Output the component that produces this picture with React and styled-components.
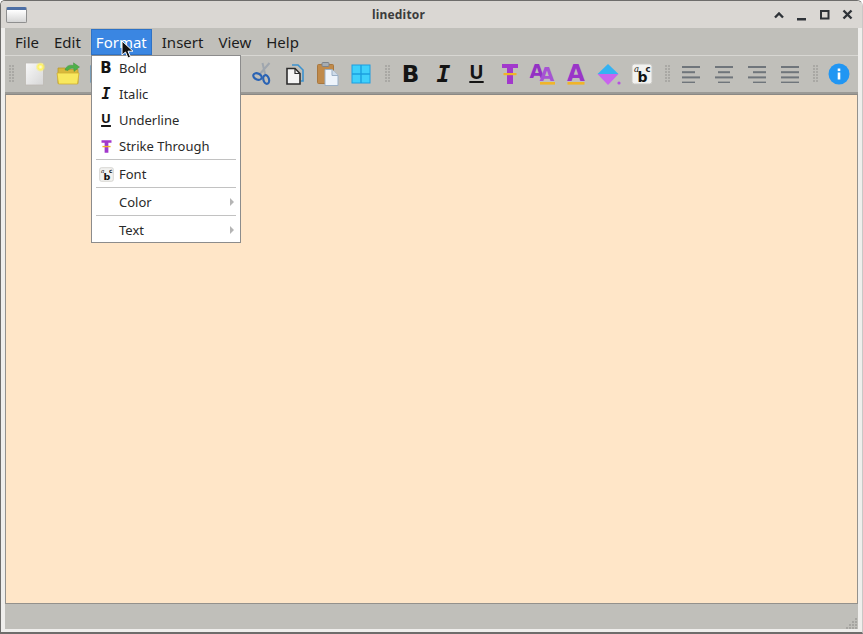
import styled, { createGlobalStyle } from 'styled-components';

const GlobalStyle = createGlobalStyle`
  html, body {
    margin: 0;
    padding: 0;
    width: 100%;
    height: 100%;
    background: #ffffff;
    overflow: hidden;
  }
`;

// Window frame
const Frame = styled.div`
  position: relative;
  box-sizing: border-box;
  display: flex;
  flex-direction: column;
  width: 863px;
  height: 634px;
  background-color: #efeeec;
  border: 1px solid #6e6d6b;
  border-right-color: #c9c8c6;
  border-bottom-width: 2px;
  border-radius: 5px 6px 0 0;
  font-family: "Noto Sans", sans-serif;
  color: #1c1c1c;
  overflow: hidden;
`;

const TitleBar = styled.div`
  display: flex;
  align-items: center;
  flex: 0 0 27px;
  background-color: #dad7d3;
  padding: 0 5px;
`;

const AppIcon = styled.div`
  box-sizing: border-box;
  width: 21px;
  height: 16px;
  border: 1px solid #8f8f8f;
  border-top: 3px solid #4d6fa5;
  border-radius: 2px;
  background: linear-gradient(#ffffff, #d6d6d6);
`;

const Title = styled.div`
  flex: 1;
  text-align: center;
  font-size: 12px;
  font-weight: 700;
  color: #3c3c3c;
  letter-spacing: 0.2px;
`;

const TitleButtons = styled.div`
  display: flex;
  gap: 5px;
`;

const Client = styled.div`
  display: flex;
  flex-direction: column;
  flex: 1;
  margin: 0 4px 3px;
  background-color: #c0bfba;
  min-height: 0;
`;

// Menu bar
const MenuBar = styled.div`
  display: flex;
  gap: 5px;
  flex: 0 0 27px;
  padding: 1px 5px 0;
  box-sizing: border-box;
`;

const MenuItem = styled.div`
  display: flex;
  align-items: center;
  padding: 0 5px 1px;
  font-size: 15px;
  color: ${(p) => (p.$active ? '#ffffff' : '#1c1c1c')};
  background-color: ${(p) => (p.$active ? '#3a86e2' : 'transparent')};
  box-shadow: ${(p) => (p.$active ? 'inset 0 0 0 1px #2e72c6' : 'none')};
`;

// Tool bar
const ToolBar = styled.div`
  display: flex;
  align-items: center;
  flex: none;
  height: 36px;
  border-top: 1px solid #d8d7d3;
  border-bottom: 2px solid #9b9a96;
  padding-left: 4px;
`;

const Handle = styled.div`
  flex: 0 0 6px;
  height: 18px;
  margin: ${(p) => p.$margin || '0 3px 0 0'};
  background-image: radial-gradient(circle at 1px 1px, #a9a8a4 1px, transparent 1.2px);
  background-size: 3px 3px;
`;

const ToolButton = styled.div`
  display: flex;
  align-items: center;
  justify-content: center;
  flex: 0 0 33px;
  height: 33px;
`;

const Gap = styled.div`
  flex: 0 0 ${(p) => p.$width}px;
`;

const Glyph = styled.span`
  font-family: ${(p) => p.$font || '"DejaVu Sans"'}, sans-serif;
  font-size: ${(p) => p.$size || 23}px;
  font-weight: 700;
  font-style: ${(p) => (p.$italic ? 'italic' : 'normal')};
  text-decoration: ${(p) => (p.$under ? 'underline' : 'none')};
  text-decoration-thickness: 2px;
  text-underline-offset: 2px;
  padding-bottom: ${(p) => (p.$under ? '0.2em' : '0')};
  line-height: 1;
  color: #141414;
`;

// Editor and status
const Editor = styled.div`
  flex: 1;
  box-sizing: border-box;
  background-color: #ffe6c8;
  border: 1px solid #94918c;
  border-top-color: #8b8985;
`;

const StatusBar = styled.div`
  position: relative;
  flex: 0 0 25px;
`;

const Grip = styled.svg`
  position: absolute;
  right: 0;
  bottom: 0;
`;

// Format popup
const Popup = styled.div`
  position: absolute;
  left: 90px;
  top: 54px;
  box-sizing: border-box;
  width: 150px;
  height: 188px;
  padding: 0 4px;
  background-color: #ffffff;
  border: 1px solid #8c8c8c;
`;

const PopupRow = styled.div`
  display: flex;
  align-items: center;
  box-sizing: border-box;
  height: 26px;
  padding-bottom: 2px;
  font-size: 13px;
  color: #2a2a2a;
`;

const RowIcon = styled.div`
  display: flex;
  align-items: center;
  justify-content: center;
  flex: 0 0 20px;
  margin-right: 3px;
`;

const RowLabel = styled.div`
  flex: 1;
`;

const SubArrow = styled.div`
  width: 0;
  height: 0;
  margin-right: 2px;
  border-left: 4px solid #b5b5b5;
  border-top: 4px solid transparent;
  border-bottom: 4px solid transparent;
`;

const Divider = styled.div`
  height: 1px;
  margin: -1px 0 2px;
  background-color: #c2c2c2;
`;

const Cursor = styled.svg`
  position: absolute;
  left: 120px;
  top: 39px;
`;

// Icons
const ChevronUp = () => (
  <svg width="18" height="18" viewBox="0 0 18 18" fill="none" stroke="#2f3338" strokeWidth="2.4">
    <path d="M5 11.5 L9 7.5 L13 11.5" />
  </svg>
);

const Minimize = () => (
  <svg width="18" height="18" viewBox="0 0 18 18">
    <rect x="4" y="12" width="9" height="2.5" fill="#2f3338" />
  </svg>
);

const Maximize = () => (
  <svg width="18" height="18" viewBox="0 0 18 18" fill="none" stroke="#2f3338" strokeWidth="2">
    <rect x="5" y="5" width="7.5" height="7.5" />
  </svg>
);

const CloseX = () => (
  <svg width="18" height="18" viewBox="0 0 18 18" fill="none" stroke="#2f3338" strokeWidth="2.4">
    <path d="M4.5 4.5 L12.5 12.5 M12.5 4.5 L4.5 12.5" />
  </svg>
);

const NewIcon = () => (
  <svg width="24" height="24" viewBox="0 0 24 24">
    <defs>
      <linearGradient id="pageFill" x1="0" y1="0" x2="1" y2="1">
        <stop offset="0" stopColor="#f9f9f9" />
        <stop offset="1" stopColor="#d6d6d6" />
      </linearGradient>
      <radialGradient id="starGlow">
        <stop offset="0" stopColor="#fffde0" />
        <stop offset="0.5" stopColor="#fff25e" />
        <stop offset="1" stopColor="#fff25e" stopOpacity="0" />
      </radialGradient>
    </defs>
    <rect x="2.5" y="1" width="18" height="22" fill="url(#pageFill)" stroke="#bdbab4" strokeWidth="0.8" />
    <circle cx="17.5" cy="5" r="5" fill="url(#starGlow)" />
  </svg>
);

const OpenIcon = () => (
  <svg width="26" height="24" viewBox="0 0 26 24">
    <path d="M3 6 h7 l2 1.5 h11 v14 H3 Z" fill="#d9b93c" stroke="#b89a30" strokeWidth="0.8" />
    <path d="M2 11 h22 l-1.5 11 H3.5 Z" fill="#f8e85e" stroke="#cfae34" strokeWidth="0.8" />
    <path d="M10 8 C11 3.5 15 2.5 18.5 3.5 L18.5 0.8 L24.5 5 L19 9.5 L18.8 6.5 C16 6 14 6.5 13 8.5 Z" fill="#4fb04a" stroke="#3a8c38" strokeWidth="0.4" />
  </svg>
);

const SaveIcon = () => (
  <svg width="24" height="24" viewBox="0 0 24 24">
    <rect x="2" y="2" width="20" height="20" rx="2" fill="#4a9fe0" stroke="#2f78b5" />
    <rect x="6" y="3" width="12" height="7" fill="#e8f2fb" />
    <rect x="7" y="14" width="10" height="8" fill="#d4e4f2" />
  </svg>
);

const CutIcon = () => (
  <svg width="22" height="26" viewBox="0 0 22 26" fill="none">
    <path d="M8 14 L18.5 2 M14.5 15 L11.5 2" stroke="#9fa6ae" strokeWidth="2" />
    <ellipse cx="6.5" cy="15.5" rx="4.4" ry="3" transform="rotate(25 6.5 15.5)" stroke="#2a63b4" strokeWidth="2.2" />
    <ellipse cx="15.2" cy="18.5" rx="2.8" ry="4.4" transform="rotate(-15 15.2 18.5)" stroke="#2a63b4" strokeWidth="2.2" />
  </svg>
);

const CopyIcon = () => (
  <svg width="22" height="24" viewBox="0 0 22 24" fill="none">
    <path d="M8 3 h6 l5 5 v11 h-2" stroke="#3b92cf" strokeWidth="1.6" />
    <path d="M3 6.5 h8 l5 5 v10.5 H3 Z" fill="#f4f4f4" stroke="#2c2c2c" strokeWidth="1.6" />
    <path d="M11 6.5 v5 h5" stroke="#2c2c2c" strokeWidth="1.2" />
  </svg>
);

const PasteIcon = () => (
  <svg width="24" height="26" viewBox="0 0 24 26">
    <rect x="1.5" y="3.5" width="16" height="19" rx="1" fill="#c08a4a" stroke="#a8773f" />
    <rect x="6" y="1.5" width="7" height="4" rx="1" fill="#a6acb2" stroke="#7d838a" />
    <path d="M9 8.5 h7 l6 6 v10 H9 Z" fill="#eef4fb" stroke="#9bb0c6" />
    <path d="M16 8.5 v6 h6" fill="#cfdcea" stroke="#9bb0c6" />
  </svg>
);

const GridIcon = () => (
  <svg width="20" height="20" viewBox="0 0 20 20">
    <rect x="1" y="1" width="18" height="18" fill="#3fd0fb" stroke="#1c9ee0" />
    <path d="M10 1 V19 M1 10 H19" stroke="#1c9ee0" strokeWidth="1.4" />
  </svg>
);

const StrikeIcon = ({ size = 24 }) => (
  <svg width={size} height={size} viewBox="0 0 24 24">
    <path d="M4 2 H20 V6 H15 V22 H9 V6 H4 Z" fill="#a238cc" />
    <rect x="5.5" y="11" width="13" height="2.2" fill="#f0b429" />
  </svg>
);

const DoubleAIcon = () => (
  <svg width="28" height="26" viewBox="0 0 28 26">
    <text x="0.5" y="16.5" fontFamily="DejaVu Sans" fontWeight="700" fontSize="19" fill="#9332c4">A</text>
    <text x="10.5" y="19.5" fontFamily="DejaVu Sans" fontWeight="700" fontSize="19" fill="#a653d4">A</text>
    <rect x="11" y="21" width="15" height="2.6" fill="#f0b429" />
  </svg>
);

const ColorAIcon = () => (
  <svg width="22" height="26" viewBox="0 0 22 26">
    <text x="2" y="19.5" fontFamily="DejaVu Sans" fontWeight="700" fontSize="23" fill="#9a35c8">A</text>
    <rect x="2.5" y="21" width="17" height="2.6" fill="#f0b429" />
  </svg>
);

const FillIcon = () => (
  <svg width="24" height="24" viewBox="0 0 24 24">
    <path d="M11 2 L21.5 12 H0.5 Z" fill="#35b2f2" />
    <path d="M0.5 12 H21.5 L11 23 Z" fill="#c964ee" />
    <circle cx="22" cy="21" r="1.6" fill="#b552e0" />
  </svg>
);

const FontIcon = ({ size = 22 }) => (
  <svg width={size} height={size} viewBox="0 0 22 22">
    <rect x="1" y="1" width="20" height="20" rx="2.5" fill="#f2f2f0" stroke="#c8c7c3" />
    <text x="3" y="9" fontFamily="DejaVu Serif" fontStyle="italic" fontSize="8.5" fill="#222">a</text>
    <text x="6.5" y="18.5" fontFamily="DejaVu Sans" fontWeight="700" fontSize="14" fill="#111">b</text>
    <text x="14.5" y="9" fontFamily="DejaVu Sans" fontWeight="700" fontSize="8.5" fill="#222">c</text>
  </svg>
);

const alignRows = {
  left: [[0, 18], [0, 13], [0, 18], [0, 13]],
  center: [[0, 18], [3, 12], [0, 18], [3, 12]],
  right: [[0, 18], [5, 13], [0, 18], [5, 13]],
  justify: [[0, 18], [0, 18], [0, 18], [0, 18]],
};

const AlignIcon = ({ mode }) => (
  <svg width="18" height="18" viewBox="0 0 18 18">
    {alignRows[mode].map(([x, w], i) => (
      <rect key={i} x={x} y={1 + i * 5.2} width={w} height="2" fill="#6f757b" />
    ))}
  </svg>
);

const InfoIcon = () => (
  <svg width="22" height="22" viewBox="0 0 22 22">
    <circle cx="11" cy="11" r="10.5" fill="#2196f3" />
    <rect x="9.7" y="9.5" width="2.6" height="7" fill="#ffffff" />
    <rect x="9.7" y="5.5" width="2.6" height="2.6" fill="#ffffff" />
  </svg>
);

const monoFont = '"DejaVu Sans Mono"';
const plainFont = '"Noto Sans"';

function App() {
  return (
    <>
      <GlobalStyle />
      <Frame>
        <TitleBar>
          <AppIcon />
          <Title>lineditor</Title>
          <TitleButtons>
            <ChevronUp />
            <Minimize />
            <Maximize />
            <CloseX />
          </TitleButtons>
        </TitleBar>

        <Client>
          <MenuBar>
            <MenuItem>File</MenuItem>
            <MenuItem>Edit</MenuItem>
            <MenuItem $active>Format</MenuItem>
            <MenuItem>Insert</MenuItem>
            <MenuItem>View</MenuItem>
            <MenuItem>Help</MenuItem>
          </MenuBar>

          <ToolBar>
            <Handle />
            <ToolButton><NewIcon /></ToolButton>
            <ToolButton><OpenIcon /></ToolButton>
            <ToolButton><SaveIcon /></ToolButton>
            <Gap $width={119} />
            <Handle />
            <ToolButton><CutIcon /></ToolButton>
            <ToolButton><CopyIcon /></ToolButton>
            <ToolButton><PasteIcon /></ToolButton>
            <ToolButton><GridIcon /></ToolButton>
            <Handle $margin="0 3px 0 8px" />
            <ToolButton><Glyph>B</Glyph></ToolButton>
            <ToolButton><Glyph $italic $font={monoFont}>I</Glyph></ToolButton>
            <ToolButton><Glyph $under $size={19} $font={plainFont}>U</Glyph></ToolButton>
            <ToolButton><StrikeIcon /></ToolButton>
            <ToolButton><DoubleAIcon /></ToolButton>
            <ToolButton><ColorAIcon /></ToolButton>
            <ToolButton><FillIcon /></ToolButton>
            <ToolButton><FontIcon /></ToolButton>
            <Handle $margin="0 3px 0 7px" />
            <ToolButton><AlignIcon mode="left" /></ToolButton>
            <ToolButton><AlignIcon mode="center" /></ToolButton>
            <ToolButton><AlignIcon mode="right" /></ToolButton>
            <ToolButton><AlignIcon mode="justify" /></ToolButton>
            <Handle $margin="0 3px 0 7px" />
            <ToolButton><InfoIcon /></ToolButton>
          </ToolBar>

          <Editor />

          <StatusBar>
            <Grip width="12" height="12" viewBox="0 0 12 12" fill="#a6a5a1">
              <rect x="9" y="1" width="2" height="2" />
              <rect x="6" y="4" width="2" height="2" />
              <rect x="9" y="4" width="2" height="2" />
              <rect x="3" y="7" width="2" height="2" />
              <rect x="6" y="7" width="2" height="2" />
              <rect x="9" y="7" width="2" height="2" />
              <rect x="0" y="10" width="2" height="2" />
              <rect x="3" y="10" width="2" height="2" />
              <rect x="6" y="10" width="2" height="2" />
              <rect x="9" y="10" width="2" height="2" />
            </Grip>
          </StatusBar>
        </Client>

        <Popup>
          <PopupRow><RowIcon><Glyph $size={15}>B</Glyph></RowIcon><RowLabel>Bold</RowLabel></PopupRow>
          <PopupRow><RowIcon><Glyph $size={15} $italic $font={monoFont}>I</Glyph></RowIcon><RowLabel>Italic</RowLabel></PopupRow>
          <PopupRow><RowIcon><Glyph $size={13} $under $font={plainFont}>U</Glyph></RowIcon><RowLabel>Underline</RowLabel></PopupRow>
          <PopupRow><RowIcon><StrikeIcon size={15} /></RowIcon><RowLabel>Strike Through</RowLabel></PopupRow>
          <Divider />
          <PopupRow><RowIcon><FontIcon size={15} /></RowIcon><RowLabel>Font</RowLabel></PopupRow>
          <Divider />
          <PopupRow><RowIcon /><RowLabel>Color</RowLabel><SubArrow /></PopupRow>
          <Divider />
          <PopupRow><RowIcon /><RowLabel>Text</RowLabel><SubArrow /></PopupRow>
        </Popup>

        <Cursor width="14" height="20" viewBox="0 0 14 20">
          <path d="M1 1 L1 15 L4.5 12 L7 18 L9.5 17 L7 11.2 L12 11.2 Z" fill="#111111" stroke="#ffffff" strokeWidth="1" />
        </Cursor>
      </Frame>
    </>
  );
}

export default App;
